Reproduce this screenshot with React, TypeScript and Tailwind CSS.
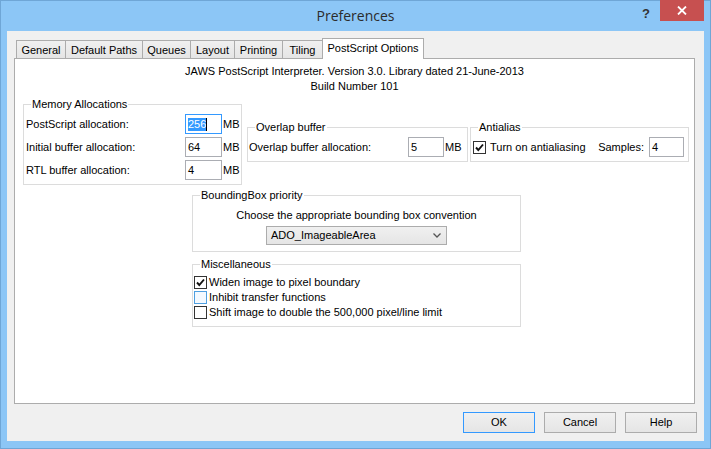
import React from 'react';

const tabs: { label: string; w: string }[] = [
  { label: 'General', w: 'w-[49px]' },
  { label: 'Default Paths', w: 'w-[77px]' },
  { label: 'Queues', w: 'w-[48px]' },
  { label: 'Layout', w: 'w-[44px]' },
  { label: 'Printing', w: 'w-[48px]' },
  { label: 'Tiling', w: 'w-[40px]' },
];

const GroupBox: React.FC<{ title: string; className?: string; children: React.ReactNode }> = ({
  title,
  className = '',
  children,
}) => (
  <fieldset className={`border border-[#dcdcdc] ${className}`}>
    <legend className="ml-[7px] px-[1px] leading-[13px]">{title}</legend>
    {children}
  </fieldset>
);

const TextBox: React.FC<{ value: string; className?: string; focused?: boolean }> = ({
  value,
  className = '',
  focused = false,
}) => (
  <div
    className={`flex h-[20px] items-center bg-white pl-[2px] ${
      focused ? 'border border-[#3399ff]' : 'border border-[#abadb3]'
    } ${className}`}
  >
    {focused ? (
      <>
        <span className="bg-[#3399ff] leading-[13px] text-white">{value}</span>
        <span className="h-[13px] w-px bg-black" />
      </>
    ) : (
      value
    )}
  </div>
);

const CheckBox: React.FC<{ checked?: boolean; hover?: boolean }> = ({ checked = false, hover = false }) => (
  <div
    className={`flex h-[13px] w-[13px] shrink-0 items-center justify-center ${
      hover ? 'border border-[#4e9fe0] bg-[#f3f9ff]' : 'border border-[#333333] bg-white'
    }`}
  >
    {checked && (
      <svg width="11" height="11" viewBox="0 0 11 11">
        <path d="M2 5.5 L4.3 8 L9 2.5" fill="none" stroke="#111" strokeWidth="1.9" />
      </svg>
    )}
  </div>
);

const Button: React.FC<{ label: string; isDefault?: boolean }> = ({ label, isDefault = false }) => (
  <div
    className={`flex h-[21px] w-[72px] items-center justify-center bg-linear-to-b from-[#f0f0f0] to-[#e5e5e5] ${
      isDefault ? 'border border-[#3399ff]' : 'border border-[#acacac]'
    }`}
  >
    {label}
  </div>
);

const MemRow: React.FC<{ label: string; value: string; focused?: boolean }> = ({ label, value, focused }) => (
  <div className="flex items-center">
    <span className="w-[159px]">{label}</span>
    <TextBox value={value} focused={focused} className="w-[37px]" />
    <span className="ml-[1px]">MB</span>
  </div>
);

export default function App() {
  return (
    <div className="flex h-[449px] w-[711px] flex-col border border-[#6fa6d6] bg-[#8cc6f6] font-['Liberation_Sans',Arial,sans-serif] text-[11px] text-black">
      {/* title bar */}
      <div className="grid h-[30px] shrink-0 grid-cols-[1fr_auto_1fr]">
        <div />
        <div className="pt-[5px] font-['Open_Sans',sans-serif] text-[14px] leading-[20px] text-[#2b2b2b]">
          Preferences
        </div>
        <div className="flex items-start justify-end">
          <span className="mr-[10px] mt-[5px] text-[13px] font-bold leading-[16px] text-[#333]">?</span>
          <div className="mr-[6px] -mt-px flex h-[21px] w-[44px] items-center justify-center bg-[#c75050]">
            <svg width="10" height="9" viewBox="0 0 10 9">
              <path d="M1 0.5 L9 8.5 M9 0.5 L1 8.5" stroke="#fff" strokeWidth="1.8" />
            </svg>
          </div>
        </div>
      </div>

      {/* client area */}
      <div className="mx-[6px] mb-[7px] flex flex-1 flex-col bg-[#f0f0f0] px-[7px] pt-[7px]">
        <div className="flex h-[20px] items-end pl-[2px]">
          {tabs.map((t) => (
            <div
              key={t.label}
              className={`flex h-[18px] items-center justify-center border-l border-t border-[#acacac] bg-linear-to-b from-[#f0f0f0] to-[#e5e5e5] pt-[1px] ${t.w}`}
            >
              {t.label}
            </div>
          ))}
          <div className="relative z-10 -mb-px flex h-[21px] w-[102px] items-center justify-center border-x border-t border-[#acacac] bg-white pb-[2px]">
            PostScript Options
          </div>
        </div>

        <div className="flex h-[346px] w-[681px] flex-col border border-[#acacac] bg-white">
          <div className="pt-[5px] text-center leading-[15px]">
            JAWS PostScript Interpreter. Version 3.0. Library dated 21-June-2013
            <br />
            Build Number 101
          </div>

          <div className="mt-[4px] flex items-start pl-[8px]">
            <GroupBox title="Memory Allocations" className="w-[219px]">
              <div className="flex flex-col gap-[3px] pb-[4px] pl-[2px] pt-[3px]">
                <MemRow label="PostScript allocation:" value="256" focused />
                <MemRow label="Initial buffer allocation:" value="64" />
                <MemRow label="RTL buffer allocation:" value="4" />
              </div>
            </GroupBox>

            <GroupBox title="Overlap buffer" className="ml-[5px] mt-[23px] w-[221px]">
              <div className="flex items-center pb-[4px] pl-[1px] pt-[3px]">
                <span className="w-[159px]">Overlap buffer allocation:</span>
                <TextBox value="5" className="h-[19px] w-[36px]" />
                <span className="ml-[1px]">MB</span>
              </div>
            </GroupBox>

            <GroupBox title="Antialias" className="ml-[2px] mt-[23px] w-[219px]">
              <div className="flex items-center pb-[4px] pl-[2px] pr-[4px] pt-[3px]">
                <CheckBox checked />
                <span className="ml-[4px]">Turn on antialiasing</span>
                <span className="ml-auto">Samples:</span>
                <TextBox value="4" className="ml-[5px] h-[19px] w-[35px]" />
              </div>
            </GroupBox>
          </div>

          <GroupBox title="BoundingBox priority" className="ml-[177px] mt-[4px] w-[329px]">
            <div className="flex flex-col items-center pb-[6px] pt-[7px]">
              <span className="leading-[13px]">Choose the appropriate bounding box convention</span>
              <div className="mt-[4px] flex h-[19px] w-[181px] items-center border border-[#acacac] bg-linear-to-b from-[#f0f0f0] to-[#e5e5e5] pl-[4px] pr-[5px]">
                <span className="flex-1">ADO_ImageableArea</span>
                <svg width="8" height="5" viewBox="0 0 8 5">
                  <path d="M0.5 0.5 L4 4 L7.5 0.5" fill="none" stroke="#555" strokeWidth="1.3" />
                </svg>
              </div>
            </div>
          </GroupBox>

          <GroupBox title="Miscellaneous" className="ml-[177px] mt-[6px] w-[329px]">
            <div className="flex flex-col pb-[6px] pl-[1px] pt-[4px]">
              <div className="flex h-[15px] items-center">
                <CheckBox checked />
                <span className="ml-[2px]">Widen image to pixel boundary</span>
              </div>
              <div className="flex h-[15px] items-center">
                <CheckBox hover />
                <span className="ml-[2px]">Inhibit transfer functions</span>
              </div>
              <div className="flex h-[15px] items-center">
                <CheckBox />
                <span className="ml-[2px]">Shift image to double the 500,000 pixel/line limit</span>
              </div>
            </div>
          </GroupBox>
        </div>

        <div className="mt-[8px] flex justify-end gap-[9px]">
          <Button label="OK" isDefault />
          <Button label="Cancel" />
          <Button label="Help" />
        </div>
      </div>
    </div>
  );
}
